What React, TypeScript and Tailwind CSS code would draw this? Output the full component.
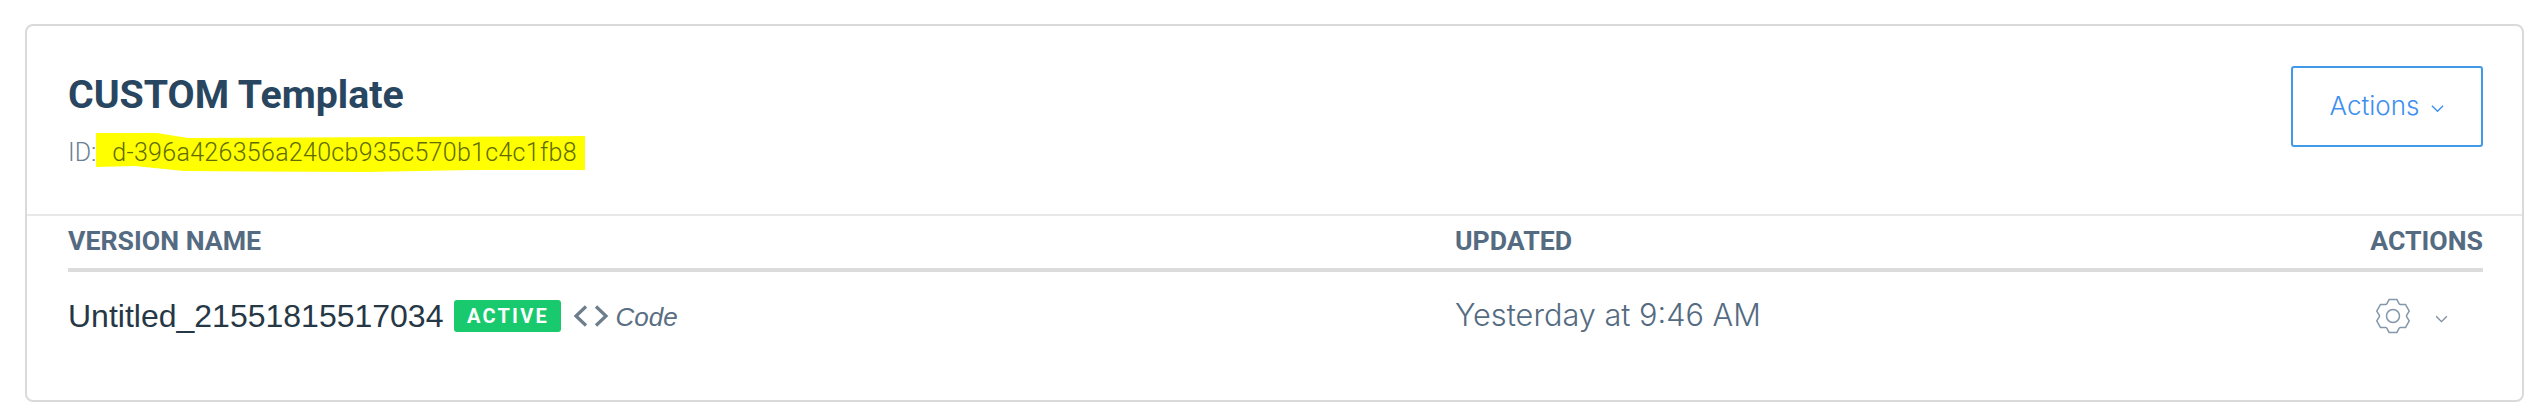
import React from "react";

const Chevron: React.FC<{ className: string }> = ({ className }) => (
  <svg viewBox="0 0 14 9" fill="none" stroke="currentColor" strokeWidth="1.5" className={className}>
    <path d="M1 1.5 L7 7.5 L13 1.5" />
  </svg>
);

// six teeth, flat on top and bottom like the reference
const gearPoints = [90, 30, -30, -90, -150, 150]
  .flatMap((a) =>
    [
      [a + 27, 13.6],
      [a + 13, 17],
      [a - 13, 17],
      [a - 27, 13.6],
    ].map(([d, r]) => {
      const t = (d * Math.PI) / 180;
      return `${(18 + r * Math.cos(t)).toFixed(2)},${(18 - r * Math.sin(t)).toFixed(2)}`;
    })
  )
  .join(" ");

const Gear: React.FC = () => (
  <svg viewBox="0 0 36 36" fill="none" stroke="#8397ab" strokeWidth="1.5" strokeLinejoin="round" className="w-[36px] h-[36px]">
    <polygon points={gearPoints} />
    <circle cx="18" cy="18" r="6.5" />
  </svg>
);

export default function App() {
  return (
    <div className="w-[2543px] h-[419px] bg-white pt-[24px] pl-[25px]">
      <div className="w-[2499px] h-[378px] border-2 border-[#dadada] rounded-[8px] flex flex-col">
        <header className="h-[190px] flex justify-between pl-[41px] pr-[39px] border-b-2 border-[#e8e8e8]">
          <div className="pt-[45px]">
            <h1 className="font-['Roboto',sans-serif] font-bold text-[39.3px] leading-[48px] text-[#294661]">CUSTOM Template</h1>
            <p className="mt-[17px] flex items-center h-[34px] font-['Roboto',sans-serif] font-light text-[25px] text-[#6a7f94]">
              ID:
              <span className="relative pl-[16px] pr-[10px] h-[34px] leading-[34px] text-[#5f6c00] tracking-[0.3px]">
                <svg viewBox="0 0 490 40" className="absolute left-0 top-[-4px] w-[490px] h-[40px]" fill="#ffff00">
                  <polygon points="0,1 61,1 92,6 489,4 489,38 374,38 271,40 88,39 39,34 0,35" />
                </svg>
                <span className="relative">d-396a426356a240cb935c570b1c4c1fb8</span>
              </span>
            </p>
          </div>
          <button className="mt-[40px] w-[192px] h-[81px] pb-[3px] border-2 border-[#4299e9] rounded-[3px] flex items-center justify-center gap-[12px] font-['Inter',sans-serif] font-light text-[26px] text-[#3f8ff0]">
            Actions
            <Chevron className="w-[13px] h-[9px] mt-[6px]" />
          </button>
        </header>
        <div className="pl-[41px] pr-[39px]">
          <div className="h-[56px] pb-[2px] grid grid-cols-[1387px_1fr_auto] items-center border-b-4 border-[#dcdcdc] font-['Roboto',sans-serif] font-bold text-[26.7px] text-[#546b81]">
            <span>VERSION NAME</span>
            <span>UPDATED</span>
            <span>ACTIONS</span>
          </div>
          <div className="h-[88px] grid grid-cols-[1387px_1fr_auto] items-center">
            <div className="flex items-center">
              <span className="font-['Liberation_Sans',sans-serif] text-[32px] text-[#263746]">Untitled_21551815517034</span>
              <span className="ml-[11px] h-[32px] w-[107px] rounded-[3px] bg-[#18c96e] flex items-center justify-center font-['Roboto',sans-serif] font-bold text-[20px] tracking-[2.2px] text-white">ACTIVE</span>
              <svg viewBox="0 0 36 22" fill="none" stroke="#6c7d8c" strokeWidth="3.2" className="ml-[12px] w-[36px] h-[22px] mb-[1px]">
                <path d="M13 1.5 L3 11 L13 20.5 M23 1.5 L33 11 L23 20.5" />
              </svg>
              <span className="ml-[6px] mt-[3px] font-['Liberation_Sans',sans-serif] italic text-[26px] text-[#5a6f83]">Code</span>
            </div>
            <span className="mb-[2px] font-['Inter',sans-serif] font-light text-[30.7px] text-[#546b81]">Yesterday at 9:46 AM</span>
            <div className="flex items-center justify-end pr-[35px] gap-[24px]">
              <Gear />
              <Chevron className="w-[13px] h-[8px] mt-[5px] text-[#7b8da0]" />
            </div>
          </div>
        </div>
      </div>
    </div>
  );
}
